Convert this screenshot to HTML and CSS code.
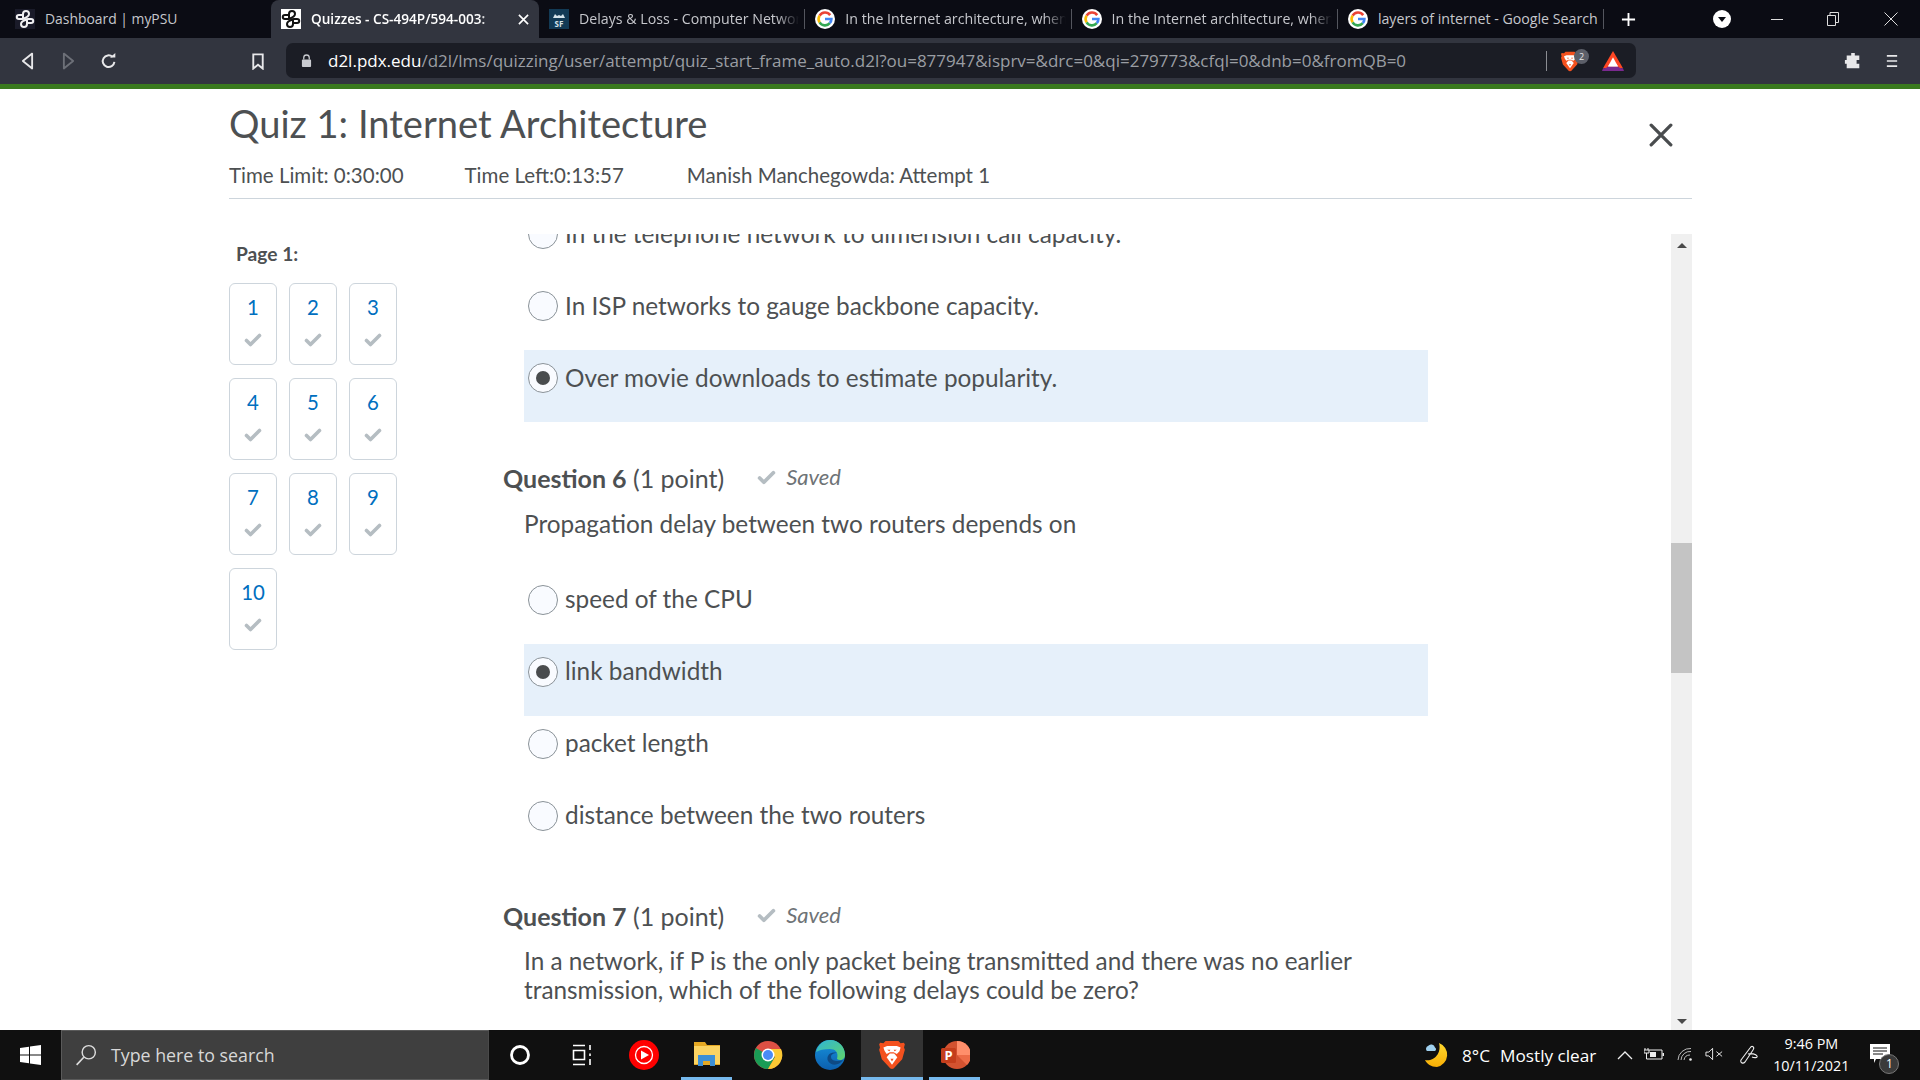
FILE: index.html
```html
<!DOCTYPE html>
<html lang="en">
<head>
<meta charset="utf-8">
<title>Quiz 1: Internet Architecture</title>
<link rel="stylesheet" href="styles.css">
</head>
<body>
<svg class="defs" width="0" height="0" aria-hidden="true">
  <defs>
    <linearGradient id="edgeA" x1="0" y1="0" x2="1" y2="1"><stop offset="0" stop-color="#2fb5d8"/><stop offset="1" stop-color="#5fd36a"/></linearGradient>
    <linearGradient id="edgeB" x1="0" y1="0" x2="0" y2="1"><stop offset="0" stop-color="#1793dd"/><stop offset="1" stop-color="#0c5fae"/></linearGradient>
    <linearGradient id="moonG" x1="0" y1="0" x2="0" y2="1"><stop offset="0" stop-color="#ffd92e"/><stop offset="1" stop-color="#f8ae05"/></linearGradient>
  </defs>
  <symbol id="g" viewBox="0 0 20 20">
    <circle cx="10" cy="10" r="10" fill="#fff"/>
    <path d="M15.2 6.100A6.400 6.400 0 0 0 4.600 6.600" fill="none" stroke="#ea4335" stroke-width="2.600"/>
    <path d="M4.600 6.600a6.400 6.400 0 0 0 0 6.800" fill="none" stroke="#fbbc05" stroke-width="2.600"/>
    <path d="M4.600 13.400a6.400 6.400 0 0 0 10.200.800" fill="none" stroke="#34a853" stroke-width="2.600"/>
    <path d="M14.800 14.200a6.400 6.400 0 0 0 1.600-4.200H10" fill="none" stroke="#4285f4" stroke-width="2.600"/>
  </symbol>
  <symbol id="knot" viewBox="0 0 20 20">
    <rect width="20" height="20" fill="#fff"/>
    <path d="M8 10V5c0-4 6-4 6 0 0 3-4 4-7 5H4c-3 0-3-4 0-4h4M12 10v5c0 4-6 4-6 0 0-3 4-4 7-5h3c3 0 3 4 0 4h-4" fill="none" stroke="#111" stroke-width="2"/>
  </symbol>
  <symbol id="knotdark" viewBox="0 0 20 20">
    <rect width="20" height="20" fill="#1a1b29"/>
    <path d="M8 10V5c0-4 6-4 6 0 0 3-4 4-7 5H4c-3 0-3-4 0-4h4M12 10v5c0 4-6 4-6 0 0-3 4-4 7-5h3c3 0 3 4 0 4h-4" fill="none" stroke="#f0f0f2" stroke-width="2"/>
  </symbol>
  <symbol id="lion" viewBox="0 0 24 28">
    <path d="M6 1h12l2 2 3-.5L24 4l-.8 3 .8 2-2.500 9-8 8.500L12 27l-1.500-.5-8-8.500L0 9l.8-2L0 4l1-1.500 3 .5z" fill="#f4511e"/>
    <path d="M7.500 5.500h9l3.500 1.500-1 3.500-2.500 2.500-3-1.500h-3.500l-3 1.500L5 10 4 7z" fill="#fff"/>
    <path d="M10 12.500h4l3 3.500-5 7-5-7z" fill="#fff"/>
    <path d="M7.500 9h3l-1 1.500zM16.500 9h-3l1 1.500zM10.500 17.500h3L12 20z" fill="#f4511e"/>
  </symbol>
  <symbol id="tick" viewBox="0 0 18 14">
    <path d="M2.500 7.500 6.500 11.500 15.500 2.500" fill="none" stroke="currentColor" stroke-width="3.600" stroke-linecap="round" stroke-linejoin="round"/>
  </symbol>
</svg>

<header class="tabs">
  <div class="tab tab-first">
    <svg class="fav"><use href="#knotdark"/></svg><span class="tab-text">Dashboard | myPSU</span>
  </div>
  <div class="tab tab-active">
    <svg class="fav"><use href="#knot"/></svg><span class="tab-text">Quizzes - CS-494P/594-003:</span>
    <svg class="tab-close" viewBox="0 0 12 12"><path d="M1 1l10 10M11 1 1 11" stroke="#fff" stroke-width="1.800"/></svg>
  </div>
  <div class="tab">
    <svg class="fav" viewBox="0 0 20 20"><rect width="20" height="20" fill="#123a55"/><path d="M4 9l2-4 2 2 2-1 2 1 2-2 2 4z" fill="#d5e3ea"/><text x="10" y="18" class="fav-sf">SF</text></svg><span class="tab-text">Delays &amp; Loss - Computer Networks</span>
  </div>
  <div class="tab">
    <svg class="fav"><use href="#g"/></svg><span class="tab-text">In the Internet architecture, when a packet</span>
  </div>
  <div class="tab">
    <svg class="fav"><use href="#g"/></svg><span class="tab-text">In the Internet architecture, when a packet</span>
  </div>
  <div class="tab">
    <svg class="fav"><use href="#g"/></svg><span class="tab-text tab-text-full">layers of internet - Google Search</span>
  </div>
  <svg class="tab-plus" viewBox="0 0 16 16"><path d="M8 1v14M1 8h14" stroke="#fff" stroke-width="2"/></svg>
  <div class="win-controls">
    <svg class="win-drop" viewBox="0 0 18 18"><circle cx="9" cy="9" r="9" fill="#fff"/><path d="M5 7h8l-4 5z" fill="#0b0c14"/></svg>
    <svg class="win-btn win-min" viewBox="0 0 12 12"><path d="M0 6.500h12" stroke="#ddd" stroke-width="1"/></svg>
    <svg class="win-btn win-max" viewBox="0 0 14 14"><path d="M1.500 3.500h8v10h-8zM4 3.500v-3h8.500v10h-3" fill="none" stroke="#ddd" stroke-width="1"/></svg>
    <svg class="win-btn win-x" viewBox="0 0 14 14"><path d="M.500.500l13 13M13.500.500l-13 13" stroke="#ddd" stroke-width="1"/></svg>
  </div>
</header>

<nav class="toolbar">
  <svg class="tool tool-back" viewBox="0 0 14 20"><path d="M12 2 2 10l10 8z" fill="none" stroke="#e8e8ea" stroke-width="2" stroke-linejoin="round"/></svg>
  <svg class="tool" viewBox="0 0 14 20"><path d="M2 2l10 8-10 8z" fill="none" stroke="#6d7078" stroke-width="2" stroke-linejoin="round"/></svg>
  <svg class="tool tool-reload" viewBox="0 0 20 20"><path d="M16 11a6.500 6.500 0 1 1-2-5.500" fill="none" stroke="#e8e8ea" stroke-width="2.200"/><path d="M11 6h6V1z" fill="#e8e8ea"/></svg>
  <svg class="tool tool-mark" viewBox="0 0 14 18"><path d="M2 1.500h10v15l-5-4-5 4z" fill="none" stroke="#e8e8ea" stroke-width="2"/></svg>
  <div class="urlbar">
    <svg class="lock" viewBox="0 0 12 14"><path d="M3 6V4a3 3 0 0 1 6 0v2" fill="none" stroke="#c9cbd0" stroke-width="1.400"/><rect x="1" y="6" width="10" height="8" rx="1" fill="#c9cbd0"/></svg>
    <span class="url"><span class="url-host">d2l.pdx.edu</span>/d2l/lms/quizzing/user/attempt/quiz_start_frame_auto.d2l?ou=877947&amp;isprv=&amp;drc=0&amp;qi=279773&amp;cfql=0&amp;dnb=0&amp;fromQB=0</span>
    <span class="url-div"></span>
    <span class="shield">
      <svg class="shield-lion"><use href="#lion"/></svg>
      <span class="shield-badge">2</span>
    </span>
    <svg class="bat" viewBox="0 0 24 22"><path d="M12 0 1 19h22z" fill="#ff4724"/><path d="M12 7 6.500 17h11z" fill="#fff"/><path d="M1 19h22l1 3H0z" fill="#7a2a8f"/><path d="M0 22l6.500-5h11L24 22z" fill="#7a2a8f"/><path d="M8.500 14h7l2 3h-11z" fill="#fff"/></svg>
  </div>
  <svg class="tool tool-ext" viewBox="0 0 20 20"><path d="M8 1h4v3h5v5h-3v4h3v5H3v-5H1V9h2V4h5z" fill="#e8e8ea"/></svg>
  <svg class="tool tool-menu" viewBox="0 0 14 16"><path d="M1 2h12M1 8h12M1 14h12" stroke="#e8e8ea" stroke-width="2"/></svg>
</nav>
<div class="accent"></div>

<main class="page">
  <section class="quiz-head">
    <div class="quiz-title-row">
      <h1 class="quiz-title">Quiz 1: Internet Architecture</h1>
      <svg class="quiz-close" viewBox="0 0 22 22"><path d="M2 2l18 18M20 2 2 20" stroke="#494c4e" stroke-width="3" stroke-linecap="round"/></svg>
    </div>
    <div class="quiz-meta">
      <span>Time Limit: 0:30:00</span>
      <span>Time Left:0:13:57</span>
      <span>Manish Manchegowda: Attempt 1</span>
    </div>
  </section>

  <section class="quiz-body">
    <aside class="qnav">
      <div class="qnav-label">Page 1:</div>
      <div class="qnav-grid">
        <a class="qtile"><span>1</span><svg class="qtick"><use href="#tick"/></svg></a>
        <a class="qtile"><span>2</span><svg class="qtick"><use href="#tick"/></svg></a>
        <a class="qtile"><span>3</span><svg class="qtick"><use href="#tick"/></svg></a>
        <a class="qtile"><span>4</span><svg class="qtick"><use href="#tick"/></svg></a>
        <a class="qtile"><span>5</span><svg class="qtick"><use href="#tick"/></svg></a>
        <a class="qtile"><span>6</span><svg class="qtick"><use href="#tick"/></svg></a>
        <a class="qtile"><span>7</span><svg class="qtick"><use href="#tick"/></svg></a>
        <a class="qtile"><span>8</span><svg class="qtick"><use href="#tick"/></svg></a>
        <a class="qtile"><span>9</span><svg class="qtick"><use href="#tick"/></svg></a>
        <a class="qtile"><span>10</span><svg class="qtick"><use href="#tick"/></svg></a>
      </div>
    </aside>

    <div class="qpanel">
      <div class="qscroll">
        <div class="opt"><span class="radio"></span><span>In the telephone network to dimension call capacity.</span></div>
        <div class="opt"><span class="radio"></span><span>In ISP networks to gauge backbone capacity.</span></div>
        <div class="opt opt-on"><span class="radio radio-on"></span><span>Over movie downloads to estimate popularity.</span></div>

        <div class="qhead"><span><b>Question 6</b> (1 point)</span><span class="saved"><svg class="saved-tick"><use href="#tick"/></svg><i>Saved</i></span></div>
        <p class="qtext">Propagation delay between two routers depends on</p>
        <div class="opts">
          <div class="opt"><span class="radio"></span><span>speed of the CPU</span></div>
          <div class="opt opt-on"><span class="radio radio-on"></span><span>link bandwidth</span></div>
          <div class="opt"><span class="radio"></span><span>packet length</span></div>
          <div class="opt"><span class="radio"></span><span>distance between the two routers</span></div>
        </div>

        <div class="qhead"><span><b>Question 7</b> (1 point)</span><span class="saved"><svg class="saved-tick"><use href="#tick"/></svg><i>Saved</i></span></div>
        <p class="qtext">In a network, if P is the only packet being transmitted and there was no earlier<br>transmission, which of the following delays could be zero?</p>
      </div>
    </div>

    <div class="sbar">
      <span class="sbar-up"></span>
      <span class="sbar-thumb"></span>
      <span class="sbar-down"></span>
    </div>
  </section>
</main>

<footer class="taskbar">
  <div class="start">
    <svg class="start-logo" viewBox="0 0 21 20"><path d="M0 3l9-1.300V9.500H0zM10 1.500 21 0v9.500H10zM0 10.500h9v7.800L0 17zM10 10.500h11V20l-11-1.500z" fill="#fff"/></svg>
  </div>
  <div class="search">
    <svg class="search-ico" viewBox="0 0 20 20"><circle cx="12.500" cy="7.500" r="6" fill="none" stroke="#ddd" stroke-width="1.300"/><path d="M8 12 1.500 19" stroke="#ddd" stroke-width="1.500"/></svg>
    <span>Type here to search</span>
  </div>
  <div class="slot"><svg class="slot-ico" viewBox="0 0 24 24"><circle cx="12" cy="12" r="8.500" fill="none" stroke="#fff" stroke-width="2.800"/></svg></div>
  <div class="slot"><svg class="slot-ico" viewBox="0 0 24 24"><path d="M3 2.500h12M3 21.500h12M3.500 7.500h11v9h-11zM20 2v5M20 10.500v2.500M20 16v6" fill="none" stroke="#fff" stroke-width="1.600"/></svg></div>
  <div class="slot"><svg class="slot-ico slot-ico-lg" viewBox="0 0 30 30"><circle cx="15" cy="15" r="15" fill="#f00"/><circle cx="15" cy="15" r="8.500" fill="none" stroke="#fff" stroke-width="1.300"/><path d="M12 10.500 20 15l-8 4.500z" fill="#fff"/></svg></div>
  <div class="slot slot-open"><svg class="slot-ico slot-ico-lg" viewBox="0 0 30 30"><path d="M2 2h11l2 3h13v20H2z" fill="#e5a823"/><path d="M2 6h26v18H2z" fill="#fbd362"/><path d="M6 26V15h17v11h-5v-5h-7v5z" fill="#3c8fd6"/><rect x="11" y="21" width="7" height="4" fill="#e5a823"/></svg></div>
  <div class="slot"><svg class="slot-ico slot-ico-lg" viewBox="0 0 30 30"><circle cx="15" cy="15" r="14" fill="#dd5044"/><path d="M15 15 2.900 8A14 14 0 0 0 15 29l7-12z" fill="#1a9c55"/><path d="M15 9h13a14 14 0 0 1-13 20l7-12z" fill="#fcc934"/><circle cx="15" cy="15" r="6.500" fill="#fff"/><circle cx="15" cy="15" r="5" fill="#4a8bf5"/></svg></div>
  <div class="slot"><svg class="slot-ico slot-ico-lg" viewBox="0 0 30 30"><circle cx="15" cy="15" r="15" fill="url(#edgeB)"/><path d="M1 12C3 4 9 0 15 0c9 0 15 7 15 15 0 5-5 6-8 4 2-7-2-10-7-10C9 9 4 10 1 12z" fill="url(#edgeA)"/><path d="M13 21c-2-5 2-10 9-8-3 0-6 1-6 4 0 4 7 5 12 3-4 6-12 6-15 1z" fill="#0e4a85"/></svg></div>
  <div class="slot slot-active"><svg class="slot-ico slot-ico-lion"><use href="#lion"/></svg></div>
  <div class="slot slot-open"><svg class="slot-ico slot-ico-lg" viewBox="0 0 30 30"><circle cx="17" cy="15" r="14" fill="#d35230"/><path d="M17 1a14 14 0 0 1 14 14H17z" fill="#ff8f6b"/><path d="M17 15h14a14 14 0 0 1-4 10z" fill="#ed6c47"/><rect x="1" y="8" width="15" height="15" rx="1.500" fill="#c43e1c"/><text x="8.500" y="20" class="ppt-p">P</text></svg></div>

  <div class="tray">
    <svg class="moon" viewBox="0 0 26 26"><path d="M15 1a12.500 12.500 0 0 1-2 24C7 25 3 22 1 18c8 2 17-6 14-17z" fill="url(#moonG)"/><path d="M3 9a3 3 0 0 1 1-5 4 4 0 0 1 7 1.500A2 2 0 0 1 11 9z" fill="#9fd0ee"/></svg>
    <span class="weather"><span>8°C</span><span>Mostly clear</span></span>
    <svg class="tray-ico tray-chev" viewBox="0 0 16 10"><path d="M1 9l7-7 7 7" fill="none" stroke="#eee" stroke-width="1.300"/></svg>
    <svg class="tray-ico tray-batt" viewBox="0 0 20 14"><path d="M5 3h13v9H5" fill="none" stroke="#eee" stroke-width="1"/><rect x="6" y="5" width="6" height="5" fill="#eee"/><rect x="18.500" y="6" width="1.500" height="3" fill="#eee"/><path d="M1 1v2M4 1v2M0 3h5v3H0zM2.500 6v6H5" fill="none" stroke="#eee"/></svg>
    <svg class="tray-ico tray-wifi" viewBox="0 0 16 14"><path d="M1 13A12 12 0 0 1 14 1.500M4 13A9 9 0 0 1 14 4.500M7 13a6 6 0 0 1 6-5" fill="none" stroke="#bbb" stroke-width="1"/><circle cx="13.500" cy="12.500" r="1.300" fill="#eee"/></svg>
    <svg class="tray-ico tray-vol" viewBox="0 0 20 14"><path d="M1 5h3l4-4v12L4 9H1zM12 4.500l6 5M18 4.500l-6 5" fill="none" stroke="#eee" stroke-width="1"/></svg>
    <svg class="tray-ico tray-pen" viewBox="0 0 20 20"><path d="M2 15 11 3c2-3 5-1 3 2L6 17c-2 2-5 1-4-2zM9 9c3-1 8 0 9 2s-3 2-5 1" fill="none" stroke="#eee" stroke-width="1.100"/></svg>
    <div class="clock"><span>9:46 PM</span><span>10/11/2021</span></div>
    <div class="notif">
      <svg class="notif-ico" viewBox="0 0 20 20"><path d="M0 0h20v15H6l-2 4v-4H0z" fill="#fff"/><path d="M3 4h14M3 7h14M3 10h10" stroke="#111" stroke-width="1"/></svg>
      <span class="notif-badge">1</span>
    </div>
  </div>
</footer>
</body>
</html>
```

FILE: styles.css
```css
* { box-sizing: border-box; }
html, body { height: 100%; }
body {
  margin: 0;
  height: 1080px;
  overflow: hidden;
  display: flex;
  flex-direction: column;
  background: #fff;
  font-family: "Open Sans", sans-serif;
}
.defs { position: absolute; }

/* tab strip */
.tabs {
  height: 38px;
  flex: none;
  display: flex;
  align-items: stretch;
  padding-left: 5px;
  background: #0b0c14;
  color: #c6c7cc;
  font-size: 14.2px;
}
.tab {
  position: relative;
  width: 266.3px;
  flex: none;
  display: flex;
  align-items: center;
  gap: 10px;
  padding: 0 6px 0 10px;
}
.tab::after {
  content: "";
  position: absolute;
  right: 0;
  top: 9px;
  height: 20px;
  width: 1px;
  background: #54565e;
}
.tab-first { width: 266px; font-size: 13.9px; }
.tab-first::after, .tab-active::after { display: none; }
.tab-active {
  width: 268px;
  background: #32353f;
  border-radius: 8px 8px 0 0;
  color: #fff;
  font-size: 13.6px;
  font-weight: 600;
}
.fav { width: 20px; height: 20px; flex: none; }
.fav-sf { font: 700 8px "Open Sans", sans-serif; fill: #d5e3ea; text-anchor: middle; }
.tab-text {
  flex: 1;
  min-width: 0;
  margin-bottom: 2px;
  overflow: hidden;
  white-space: nowrap;
  -webkit-mask-image: linear-gradient(to right, #000 90%, transparent 100%);
  mask-image: linear-gradient(to right, #000 90%, transparent 100%);
}
.tab-active .tab-text {
  -webkit-mask-image: linear-gradient(to right, #000 85%, transparent 100%);
  mask-image: linear-gradient(to right, #000 85%, transparent 100%);
}
.tab-first .tab-text, .tab-text-full { -webkit-mask-image: none; mask-image: none; }
.tab-close { width: 11px; height: 11px; flex: none; margin-right: 4px; }
.tab-plus { width: 15px; height: 15px; flex: none; align-self: center; margin-left: 17px; }
.win-controls {
  display: flex;
  align-items: center;
  margin-left: 77px;
}
.win-drop { width: 18px; height: 18px; flex: none; margin-right: 40px; }
.win-btn { width: 12px; height: 12px; flex: none; }
.win-min { margin-right: 43px; }
.win-max { width: 14px; height: 14px; margin-right: 44px; }
.win-x { width: 14px; height: 14px; }

/* toolbar */
.toolbar {
  height: 46px;
  flex: none;
  display: flex;
  align-items: center;
  padding-left: 21px;
  background: #32353f;
}
.tool { width: 13px; height: 20px; flex: none; margin-right: 27px; }
.tool-back { margin-right: 28px; }
.tool-reload { width: 18px; height: 18px; margin-left: -2px; margin-right: 133px; }
.tool-mark { width: 14px; height: 17px; margin-right: 21px; }
.urlbar {
  width: 1350px;
  height: 35px;
  margin-top: -1px;
  flex: none;
  display: flex;
  align-items: center;
  padding-left: 15px;
  border-radius: 7px;
  background: #1b1d25;
  font-size: 17px;
  color: #9a9da3;
  white-space: nowrap;
}
.lock { width: 11px; height: 13px; flex: none; margin-right: 16px; }
.url { width: 1218px; flex: none; overflow: hidden; }
.url-host { color: #fff; }
.url-div { width: 1px; height: 20px; flex: none; background: #8b8d93; }
.shield { position: relative; display: block; width: 34px; height: 24px; margin-left: 14px; flex: none; }
.shield-lion { width: 18px; height: 21px; position: absolute; left: 0; top: 2px; }
.shield-badge {
  position: absolute;
  left: 13px;
  top: 0;
  width: 15px;
  height: 15px;
  border-radius: 50%;
  background: #5c5f69;
  color: #e6e6e8;
  font-size: 9px;
  line-height: 15px;
  text-align: center;
}
.bat { width: 22px; height: 20px; flex: none; margin-left: 7px; }
.toolbar .tool-ext { width: 18px; height: 18px; margin-left: 208px; margin-right: 24px; }
.toolbar .tool-menu { width: 12px; height: 14px; margin-right: 0; }
.accent { height: 5px; flex: none; background: #3a7a1e; }

/* page */
.page {
  flex: 1;
  min-height: 0;
  display: flex;
  flex-direction: column;
  padding: 0 228px 0 229px;
  color: #4d5052;
  font-family: Lato, sans-serif;
}
.quiz-head { flex: none; border-bottom: 1px solid #cdd5dc; height: 110px; }
.quiz-title-row { display: flex; align-items: flex-start; justify-content: space-between; height: 69px; }
.quiz-title { margin: 12px 0 0; font-size: 38.1px; line-height: 44px; font-weight: 400; }
.quiz-close { width: 24px; height: 24px; margin: 34px 19px 0 0; flex: none; }
.quiz-meta { display: flex; font-size: 20.5px; line-height: 34px; }
.quiz-meta span:nth-child(1) { margin-right: 61px; }
.quiz-meta span:nth-child(2) { margin-right: 63px; }

.quiz-body { flex: 1; min-height: 0; display: flex; margin-top: 35px; }
.qnav { width: 274px; flex: none; padding-top: 8px; }
.qnav-label { margin-left: 7px; font-size: 19.2px; font-weight: 700; line-height: 24px; }
.qnav-grid {
  display: grid;
  grid-template-columns: repeat(3, 48px);
  gap: 13px 12px;
  margin-top: 17px;
}
.qtile {
  height: 82px;
  display: flex;
  flex-direction: column;
  align-items: center;
  padding-top: 10px;
  border: 1px solid #cdd5dc;
  border-radius: 6px;
  color: #006fbf;
  font-size: 20.4px;
  line-height: 26px;
}
.qtick { width: 18px; height: 14px; margin-top: 13px; color: #b5bdc2; }

.qpanel { flex: 1; min-width: 0; overflow: hidden; }
.qscroll { margin-top: -28px; font-size: 24.35px; line-height: 29px; }
.opt {
  width: 904px;
  height: 72px;
  margin-left: 21px;
  display: flex;
  align-items: flex-start;
  padding: 13px 0 0 4px;
  gap: 7px;
}
.opt-on { background: #e6f0fa; }
.radio {
  width: 30px;
  height: 30px;
  flex: none;
  display: flex;
  align-items: center;
  justify-content: center;
  border: 1px solid #8a9298;
  border-radius: 50%;
  background: #f9fbff;
}
.radio-on::after {
  content: "";
  width: 14px;
  height: 14px;
  border-radius: 50%;
  background: #494c4e;
}
.opts .opt span:last-child { margin-top: -1px; }
.qhead {
  height: 30px;
  margin-top: 41px;
  display: flex;
  align-items: center;
  gap: 33px;
  font-size: 25px;
  line-height: 30px;
}
.qhead b { font-weight: 700; }
.saved { display: flex; align-items: center; gap: 10px; margin-top: -2px; font-size: 22px; color: #6e7376; }
.saved-tick { width: 19px; height: 15px; color: #b5bdc2; }
.qtext { margin: 16px 0 0 21px; }
.opts + .qhead + .qtext { margin-top: 15px; }
.opts { margin-top: 34px; }

.sbar {
  width: 21px;
  flex: none;
  display: flex;
  flex-direction: column;
  align-items: center;
  background: #f0f0f0;
}
.sbar-up {
  margin-top: 9px;
  border: 5px solid transparent;
  border-top: 0;
  border-bottom: 5px solid #4a4a4a;
}
.sbar-thumb { width: 21px; height: 130px; margin-top: 295px; background: #c4c4c4; }
.sbar-down {
  margin-top: auto;
  margin-bottom: 6px;
  border: 5px solid transparent;
  border-bottom: 0;
  border-top: 5px solid #4a4a4a;
}

/* taskbar */
.taskbar {
  height: 50px;
  flex: none;
  display: flex;
  align-items: stretch;
  background: #101010;
  color: #fff;
  font-family: "Open Sans", sans-serif;
}
.start { width: 61px; flex: none; display: flex; align-items: center; padding-left: 20px; }
.start-logo { width: 21px; height: 20px; }
.search {
  width: 428px;
  flex: none;
  display: flex;
  align-items: center;
  gap: 14px;
  padding-left: 13px;
  background: #3f3f3f;
  border: 1px solid #5a5a5a;
  border-right-color: #4a4a4a;
  color: #d8d8d8;
  font-size: 17.8px;
}
.search-ico { width: 22px; height: 22px; flex: none; }
.slot { width: 62px; flex: none; display: flex; align-items: center; justify-content: center; }
.slot-ico { width: 24px; height: 24px; }
.slot-ico-lg { width: 30px; height: 30px; }
.slot-ico-lion { width: 26px; height: 30px; }
.slot-open { box-shadow: inset 0 -3px 0 #76b9ed; border-left: 6px solid #101010; border-right: 5px solid #101010; }
.slot-active { background: #333; box-shadow: inset 0 -3px 0 #76b9ed; }
.ppt-p { font: 700 13px "Open Sans", sans-serif; fill: #fff; text-anchor: middle; }

.tray { flex: 1; min-width: 0; display: flex; align-items: center; padding-left: 439px; }
.moon { width: 26px; height: 26px; flex: none; }
.weather { display: flex; gap: 10px; margin-left: 12px; font-size: 17.2px; white-space: nowrap; }
.tray-ico { flex: none; }
.tray-chev { width: 16px; height: 10px; margin-left: 21px; }
.tray-batt { width: 20px; height: 14px; margin-left: 11px; margin-top: -3px; }
.tray-wifi { width: 16px; height: 14px; margin-left: 13px; margin-top: -2px; }
.tray-vol { width: 19px; height: 14px; margin-left: 12px; margin-top: -2px; }
.tray-pen { width: 20px; height: 20px; margin-left: 15px; }
.clock {
  width: 90px;
  margin-left: 7px;
  display: flex;
  flex-direction: column;
  align-items: center;
  gap: 2px;
  font-size: 14.4px;
  line-height: 20px;
}
.notif { position: relative; width: 30px; height: 30px; margin-left: 14px; flex: none; }
.notif-ico { width: 20px; height: 20px; position: absolute; left: 0; top: 4px; }
.notif-badge {
  position: absolute;
  left: 9px;
  top: 14px;
  width: 20px;
  height: 20px;
  border-radius: 50%;
  background: #3a3a3a;
  border: 1px solid #777;
  font-size: 12px;
  line-height: 18px;
  text-align: center;
}
```
